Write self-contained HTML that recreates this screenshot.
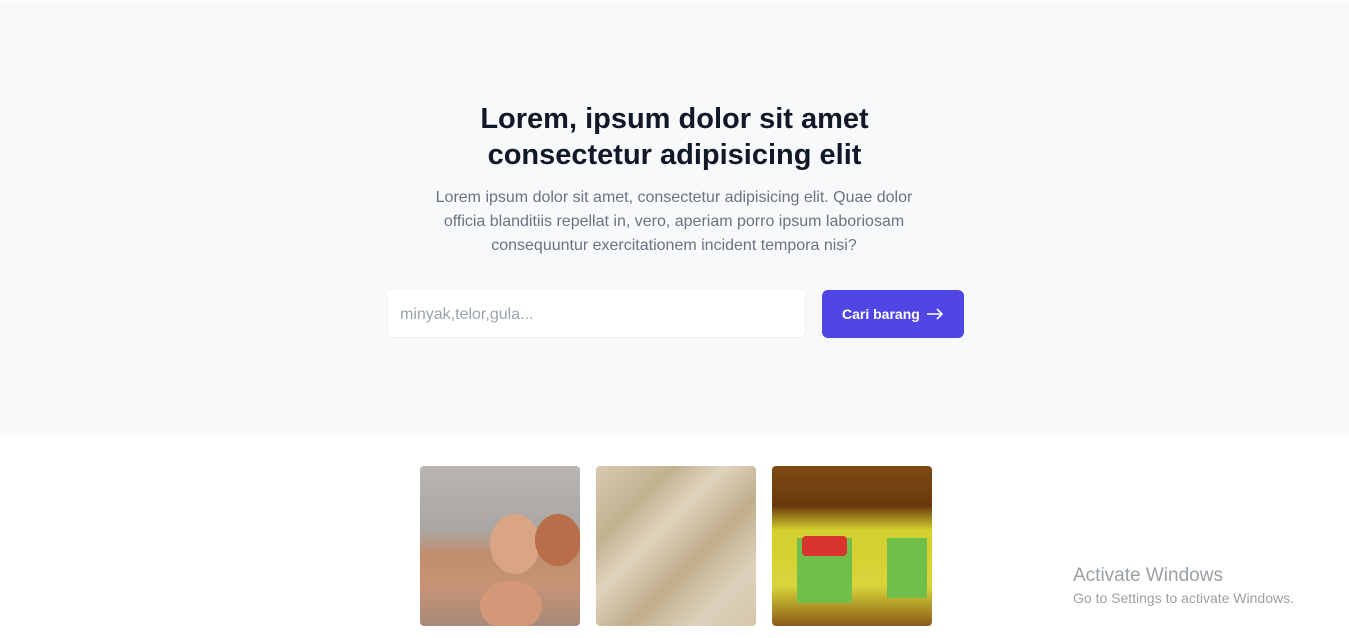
<!DOCTYPE html>
<html><head><meta charset="utf-8"><style>
body{margin:0;width:1349px;height:638px;overflow:hidden;background:#fff;font-family:"Liberation Sans",sans-serif;position:relative}
.hero{position:absolute;left:0;top:1px;width:1349px;height:432px;background:#f8f9fb}
h1{position:absolute;top:101px;left:0;width:1349px;text-align:center;margin:0;font-size:29px;line-height:36px;color:#111827;font-weight:bold}
p{position:absolute;top:186px;left:432px;width:484px;margin:0;text-align:center;font-size:16px;line-height:24px;color:#6b7280}
.inp{position:absolute;left:388px;top:290px;width:417px;height:47px;background:#fff;border-radius:6px;box-shadow:0 1px 2px rgba(0,0,0,.06);font-size:16px;color:#9ca3af;line-height:49px;padding-left:12px;box-sizing:border-box}
.btn{position:absolute;left:822px;top:290px;width:142px;height:48px;background:#4f46e5;border-radius:6px;color:#fff;font-weight:bold;font-size:14px;line-height:48px;padding-left:20px;box-sizing:border-box}
.btn svg{position:absolute;left:104px;top:18px}
.img{position:absolute;top:466px;width:160px;height:160px;border-radius:4px;overflow:hidden}
.wm{position:absolute;left:1073px;color:#9aa0a6}
</style></head><body>
<div class="hero"></div>
<h1>Lorem, ipsum dolor sit amet<br>consectetur adipisicing elit</h1>
<p>Lorem ipsum dolor sit amet, consectetur adipisicing elit. Quae dolor officia blanditiis repellat in, vero, aperiam porro ipsum laboriosam consequuntur exercitationem incident tempora nisi?</p>
<div class="inp">minyak,telor,gula...</div>
<div class="btn">Cari barang<svg width="18" height="12" viewBox="0 0 18 12"><path d="M1 6H16M11 1l5 5-5 5" stroke="#fff" stroke-width="1.6" fill="none"/></svg></div>
<div class="img" style="left:420px;background:linear-gradient(180deg,#b9b5b2 0%,#aaa6a3 40%,#c08e6e 55%,#c79375 75%,#a98a7a 100%)">
<div style="position:absolute;left:70px;top:48px;width:50px;height:60px;border-radius:50%;background:#d9a584"></div>
<div style="position:absolute;left:115px;top:48px;width:46px;height:52px;border-radius:50%;background:#b86e48"></div>
<div style="position:absolute;left:60px;top:115px;width:62px;height:50px;border-radius:50%;background:#d39877"></div></div>
<div class="img" style="left:596px;background:linear-gradient(135deg,#d8cab0 0%,#c3b291 25%,#e0d4be 40%,#c0ad8c 60%,#ddd1bb 80%,#d5c7ad 100%)"></div>
<div class="img" style="left:772px;background:linear-gradient(180deg,#7c4a14 0%,#6a3a0c 25%,#d2cf2e 40%,#d9d43a 75%,#8a5a18 100%)">
<div style="position:absolute;left:25px;top:72px;width:55px;height:65px;background:#6fbf4a"></div>
<div style="position:absolute;left:30px;top:70px;width:45px;height:20px;background:#d9332e;border-radius:4px"></div>
<div style="position:absolute;left:115px;top:72px;width:40px;height:60px;background:#6fbf4a"></div></div>
<div class="wm" style="top:565px;font-size:19px">Activate Windows</div>
<div class="wm" style="top:590px;font-size:14px">Go to Settings to activate Windows.</div>
</body></html>
